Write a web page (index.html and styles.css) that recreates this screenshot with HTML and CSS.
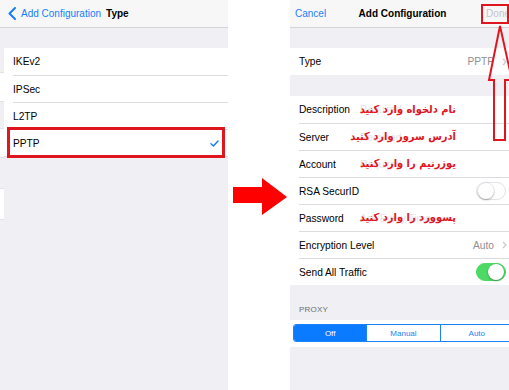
FILE: index.html
```html
<!DOCTYPE html>
<html>
<head>
<meta charset="utf-8">
<link rel="stylesheet" href="styles.css">
</head>
<body>
<div class="stage">
  <section class="panel left">
    <header class="nav nav-left">
      <svg class="back" width="8" height="13" viewBox="0 0 8 13"><path d="M7 1 L1.5 6.5 L7 12" fill="none" stroke="#157efb" stroke-width="2" stroke-linecap="round" stroke-linejoin="round"/></svg>
      <span class="back-label">Add Configuration</span>
      <span class="nav-title">Type</span>
    </header>
    <div class="left-body">
      <div class="ghost">
        <div class="ghost-block gb1"></div>
        <div class="ghost-block gb2"></div>
        <div class="ghost-block gb3"></div>
      </div>
      <div class="type-list">
        <div class="trow"><span>IKEv2</span></div>
        <div class="trow"><span>IPSec</span></div>
        <div class="trow"><span>L2TP</span></div>
        <div class="trow"><span>PPTP</span>
          <svg class="check" width="9" height="7" viewBox="0 0 9 7"><polyline points="1,3.8 3.4,6 8,1" fill="none" stroke="#157efb" stroke-width="1.5" stroke-linecap="round" stroke-linejoin="round"/></svg>
        </div>
      </div>
    </div>
    <div class="highlight"></div>
  </section>

  <div class="between">
    <svg width="54" height="37" viewBox="0 0 54 37"><polygon points="0,9 29,9 29,0 54,19 29,37 29,25 0,25" fill="#ff0000"/></svg>
  </div>

  <section class="panel right">
    <header class="nav nav-right">
      <span class="cancel">Cancel</span>
      <span class="nav-title">Add Configuration</span>
      <span class="done">Done</span>
    </header>

    <div class="group g1">
      <div class="row"><span class="label">Type</span><span class="value">PPTP</span>
        <svg class="chev" width="5" height="8" viewBox="0 0 5 8"><path d="M1 1 L4 4 L1 7" fill="none" stroke="#c7c7cc" stroke-width="1.2"/></svg>
      </div>
    </div>

    <div class="group g2">
      <div class="row"><span class="label">Description</span><span class="field">Required</span><span class="note">نام دلخواه وارد کنید</span></div>
      <div class="row"><span class="label">Server</span><span class="field">Required</span><span class="note">آدرس سرور وارد کنید</span></div>
      <div class="row"><span class="label">Account</span><span class="field">Required</span><span class="note">یوزرنیم را وارد کنید</span></div>
      <div class="row"><span class="label">RSA SecurID</span><span class="toggle"><span class="knob"></span></span></div>
      <div class="row"><span class="label">Password</span><span class="field">Ask Every Time</span><span class="note">پسوورد را وارد کنید</span></div>
      <div class="row"><span class="label">Encryption Level</span><span class="value">Auto</span>
        <svg class="chev" width="5" height="8" viewBox="0 0 5 8"><path d="M1 1 L4 4 L1 7" fill="none" stroke="#c7c7cc" stroke-width="1.2"/></svg>
      </div>
      <div class="row"><span class="label">Send All Traffic</span><span class="toggle on"><span class="knob"></span></span></div>
    </div>

    <div class="section-header">PROXY</div>
    <div class="seg-wrap">
      <div class="seg">
        <span class="seg-item active">Off</span>
        <span class="seg-item">Manual</span>
        <span class="seg-item">Auto</span>
      </div>
    </div>

    <div class="done-box"></div>
    <svg class="up-arrow" width="226" height="150" viewBox="0 0 226 150"><polygon points="210,26 199,80 204,80 204,140 215,140 215,80 222,80" fill="none" stroke="#e0161e" stroke-width="2" stroke-linejoin="miter"/></svg>
  </section>
</div>
</body>
</html>
```

FILE: styles.css
```css
* { box-sizing: border-box; margin: 0; padding: 0; }
html, body { width: 509px; height: 390px; overflow: hidden; background: #ffffff; }
body { font-family: "Liberation Sans", Arial, sans-serif; font-size: 10.2px; color: #000; }

.stage { display: flex; height: 390px; width: 516px; }
.panel { position: relative; background: #efeff4; height: 390px; flex: none; overflow: hidden; }
.left { width: 228px; }
.between { width: 62px; flex: none; padding: 178px 0 0 5px; }
.between svg { display: block; }
.right { width: 226px; }

.nav { height: 28px; background: #f7f7f7; border-bottom: 1px solid #d4d4d8; display: flex; align-items: center; }
.nav-title { font-weight: bold; font-size: 10px; }

.nav-left { padding-left: 8px; }
.back { display: block; flex: none; }
.back-label { color: #157efb; font-size: 10px; margin-left: 5px; }
.nav-left .nav-title { margin-left: 5px; }

.left-body { display: flex; align-items: flex-start; padding-top: 20px; }
.ghost { width: 4px; flex: none; display: flex; flex-direction: column; }
.ghost-block { background: #ffffff; border-top: 1px solid #e2e2e6; border-bottom: 1px solid #e2e2e6; }
.gb1 { margin-top: 24px; height: 30px; }
.gb2 { margin-top: 26px; height: 30px; }
.gb3 { margin-top: 30px; height: 32px; }

.type-list { flex: 1; background: #ffffff; border-bottom: 1px solid #dcdce0; }
.trow { height: 27px; margin-left: 9px; padding-right: 9px; display: flex; align-items: center; justify-content: space-between; }
.trow + .trow { border-top: 1px solid #dcdce0; }
.check { display: block; }

.highlight { position: absolute; left: 7px; top: 127px; width: 218px; height: 31px; border: 3px solid #e0161e; }

.nav-right { display: grid; grid-template-columns: 1fr auto 1fr; padding: 0 6px 0 5px; }
.cancel { color: #1a82fb; font-size: 10px; justify-self: start; }
.done { color: #c4c4c9; font-size: 10px; justify-self: end; }

.group { background: #ffffff; }
.g1 { margin-top: 20px; }
.g2 { margin-top: 21px; }
.row { position: relative; height: 27px; margin-left: 9px; display: flex; align-items: center; }
.row + .row { border-top: 1px solid #dcdce0; }
.label { width: 61px; flex: none; white-space: nowrap; }
.field { color: #e4e4e8; white-space: nowrap; }
.value { margin-left: auto; color: #8e8e93; }
.chev { display: block; margin: 0 9px 0 8px; flex: none; }

.note { position: absolute; right: 60px; top: 50%; transform: translateY(-55%); direction: rtl; font-family: "DejaVu Sans Condensed", "DejaVu Sans", sans-serif; font-stretch: condensed; font-weight: bold; font-size: 11px; color: #e0161e; white-space: nowrap; line-height: 1.2; }

.toggle { margin-left: auto; margin-right: 10px; width: 30px; height: 18px; border-radius: 9px; background: #ffffff; border: 1px solid #e3e3e8; position: relative; flex: none; display: flex; align-items: center; padding: 0 1px; }
.knob { width: 16px; height: 16px; border-radius: 50%; background: #ffffff; box-shadow: 0 1px 2px rgba(0,0,0,0.3), 0 0 0 0.5px rgba(0,0,0,0.08); }
.toggle.on { background: #4cd964; border-color: #4cd964; justify-content: flex-end; }

.section-header { height: 35px; padding: 0 9px 6px; display: flex; align-items: flex-end; font-size: 8px; color: #6d6d72; letter-spacing: 0.2px; }
.seg-wrap { background: #ffffff; height: 27px; padding: 4px 0 0 3px; }
.seg { display: flex; width: 221px; height: 18px; border: 1px solid #1a82fb; border-radius: 3px; overflow: hidden; }
.seg-item { flex: 1; display: flex; align-items: center; justify-content: center; font-size: 8px; color: #1a82fb; }
.seg-item + .seg-item { border-left: 1px solid #1a82fb; }
.seg-item.active { background: #0a7aff; color: #ffffff; }

.done-box { position: absolute; left: 191px; top: 4px; width: 28px; height: 20px; border: 2px solid #e0161e; }
.up-arrow { position: absolute; left: 0; top: 0; }
```
